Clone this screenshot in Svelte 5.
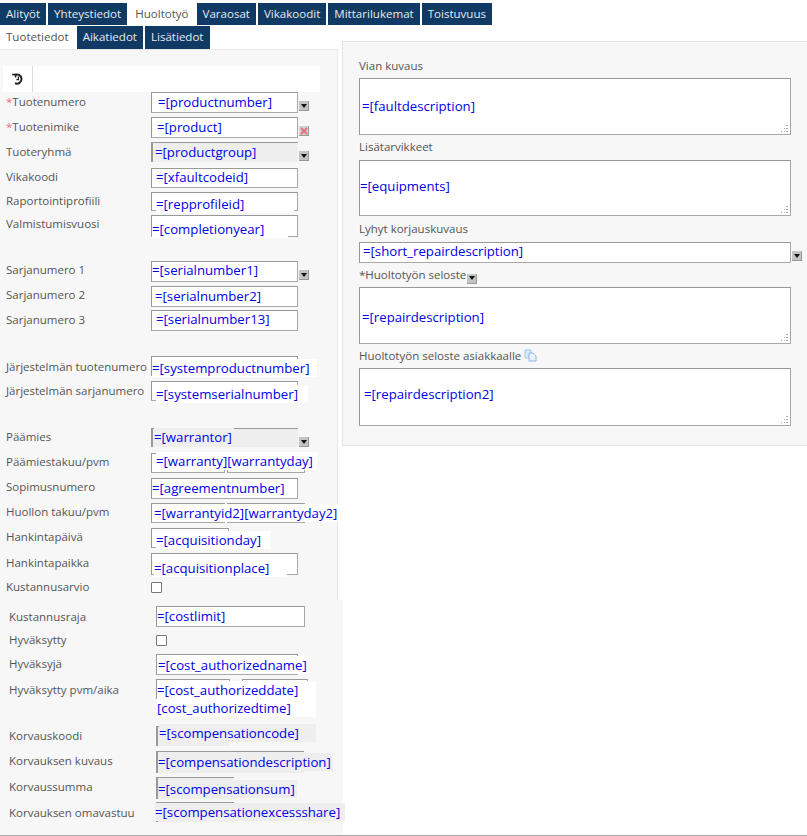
<script>
  const mainTabs = ['Alityöt', 'Yhteystiedot', 'Huoltotyö', 'Varaosat', 'Vikakoodit', 'Mittarilukemat', 'Toistuvuus'];
  const subTabs = ['Tuotetiedot', 'Aikatiedot', 'Lisätiedot'];

  // h = row pitch, fh = frame height, lt = label offset, vx/vy = where the bound value lands, vw = value box width
  const upperRows = [
    { label: 'Tuotenumero', req: true, value: '=[productnumber]', h: 25, fh: 21, lt: 1, vx: 7, vy: 2, btn: 'down' },
    { label: 'Tuotenimike', req: true, value: '=[product]', h: 25, fh: 21, lt: 1, vx: 6, vy: 2, btn: 'clear' },
    { label: 'Tuoteryhmä', value: '=[productgroup]', h: 26, fh: 20, lt: 1, vx: 4, vy: 2, btn: 'down', ro: true },
    { label: 'Vikakoodi', value: '=[xfaultcodeid]', h: 24, fh: 20, lt: 0, vx: 5, vy: 1, bare: true },
    { label: 'Raportointiprofiili', value: '=[repprofileid]', h: 23, fh: 19, lt: 0, vx: 5, vy: 4, vw: 136 },
    { label: 'Valmistumisvuosi', value: '=[completionyear]', h: 46, fh: 22, lt: 0, vx: 1, vy: 6, vw: 134 },
    { label: 'Sarjanumero 1', value: '=[serialnumber1]', h: 25, fh: 21, lt: 0, vx: 1, vy: 1, btn: 'down', bare: true },
    { label: 'Sarjanumero 2', value: '=[serialnumber2]', h: 24, fh: 21, lt: 0, vx: 4, vy: 2 },
    { label: 'Sarjanumero 3', value: '=[serialnumber13]', h: 46, fh: 21, lt: 1, vx: 5, vy: 1, bare: true },
    { label: 'Järjestelmän tuotenumero', value: '=[systemproductnumber]', h: 25, fh: 20, lt: 2, vx: 1, vy: 4, vw: 163 },
    { label: 'Järjestelmän sarjanumero', value: '=[systemserialnumber]', h: 47, fh: 20, lt: 1, vx: 5, vy: 5, vw: 150 },
    { label: 'Päämies', value: '=[warrantor]', h: 25, fh: 19, lt: 0, vx: 3, vy: 1, btn: 'down', ro: true },
    { label: 'Päämiestakuu/pvm', value: '=[warranty][warrantyday]', h: 25, fh: 20, w: 74, w2: 78, lt: 0, vx: 5, vy: 0, vw: 159 },
    { label: 'Sopimusnumero', value: '=[agreementnumber]', h: 25, fh: 21, lt: 0, vx: 1, vy: 2 },
    { label: 'Huollon takuu/pvm', value: '=[warrantyid2][warrantyday2]', h: 25, fh: 20, w: 74, w2: 78, lt: 0, vx: 3, vy: 2 },
    { label: 'Hankintapäivä', value: '=[acquisitionday]', h: 25, fh: 20, w: 78, lt: 0, vx: 5, vy: 4, vw: 112 },
    { label: 'Hankintapaikka', value: '=[acquisitionplace]', h: 29, fh: 22, lt: 1, vx: 3, vy: 7, vw: 131 },
    { label: 'Kustannusarvio', check: true, h: 19, lt: -4 }
  ];

  const lowerRows = [
    { label: 'Kustannusraja', value: '=[costlimit]', h: 29, fh: 21, w: 149, lt: 2, vx: 1, vy: 2, bare: true },
    { label: 'Hyväksytty', check: true, h: 19, lt: -4 },
    { label: 'Hyväksyjä', value: '=[cost_authorizedname]', h: 25, fh: 21, w: 142, lt: 1, vx: 2, vy: 3 },
    { label: 'Hyväksytty pvm/aika', value: '=[cost_authorizeddate]', value2: '[cost_authorizedtime]', h: 47, fh: 20, w: 74, w2: 66, gap: 12, lt: 2, vx: 1, vy: 3, vw: 157 },
    { label: 'Korvauskoodi', value: '=[scompensationcode]', h: 25, fh: 20, w: 74, lt: 1, vx: 3, vy: -1, ro: true, vw: 155 },
    { label: 'Korvauksen kuvaus', value: '=[compensationdescription]', h: 26, fh: 22, w: 148, lt: 1, vx: 2, vy: 3, ro: true },
    { label: 'Korvaussumma', value: '=[scompensationsum]', h: 25, fh: 22, w: 78, lt: 1, vx: 2, vy: 4, ro: true },
    { label: 'Korvauksen omavastuu', value: '=[scompensationexcessshare]', h: 33, fh: 20, w: 78, lt: 2, vx: -1, vy: 2, ro: true, vw: 188 }
  ];

  const areas = [
    { label: 'Vian kuvaus', value: '=[faultdescription]', h: 57, px: 2, py: 18, grip: true },
    { label: 'Lisätarvikkeet', value: '=[equipments]', h: 56, px: 0, py: 16, grip: true, lm: 4 },
    { label: 'Lyhyt korjauskuvaus', value: '=[short_repairdescription]', h: 21, px: 3, py: -1, btn: true, lm: 4, mt: 4 },
    { label: '*Huoltotyön seloste', value: '=[repairdescription]', h: 57, px: 2, py: 20, grip: true, icon: 'down' },
    { label: 'Huoltotyön seloste asiakkaalle', value: '=[repairdescription2]', h: 58, px: 4, py: 16, grip: true, icon: 'copy' }
  ];

  const valueWidth = (row) => (row.vw ? `width: ${row.vw}px;` : '');
</script>

{#snippet dropdown()}
  <span class="btn">
    <svg width="6" height="4" viewBox="0 0 6 4"><path d="M0 0h6L3 4z" fill="#111" /></svg>
  </span>
{/snippet}

{#snippet formRow(row)}
  <div class="row" style="height: {row.h}px">
    <div class="label" style="margin-top: {row.lt}px">
      {#if row.req}<span class="req">*</span>{/if}{row.label}
    </div>
    {#if row.check}
      <span class="check"></span>
    {:else}
      <div class="field">
        <span class="frame" class:ro={row.ro} style="width: {row.w ?? 147}px; height: {row.fh}px"></span>
        {#if row.w2}
          <span class="frame" style="width: {row.w2}px; height: {row.fh}px; margin-left: {row.gap ?? 2}px"></span>
        {/if}
        <span class="value" class:ro={row.ro} class:bare={row.bare} style="left: {row.vx}px; top: {row.vy}px; {valueWidth(row)}">
          {row.value}{#if row.value2}<br />{row.value2}{/if}
        </span>
        {#if row.btn === 'down'}
          {@render dropdown()}
        {:else if row.btn === 'clear'}
          <span class="btn clear">
            <svg width="8" height="8" viewBox="0 0 8 8"><path d="M1 1l6 6M7 1L1 7" stroke="#e8707c" stroke-width="2" /></svg>
          </span>
        {/if}
      </div>
    {/if}
  </div>
{/snippet}

<div class="tabs main-tabs">
  {#each mainTabs as tab}
    <span class="tab" class:active={tab === 'Huoltotyö'}>{tab}</span>
  {/each}
</div>

<div class="content">
  <div class="left">
    <div class="tabs sub-tabs">
      {#each subTabs as tab}
        <span class="tab" class:active={tab === 'Tuotetiedot'}>{tab}</span>
      {/each}
    </div>
    <div class="panel upper">
      <div class="toolbar">
        <span class="tool">
          <svg width="14" height="14" viewBox="0 0 14 14" fill="none" stroke="#222" stroke-width="2">
            <path d="M3.4 3.2A4.6 4.6 0 1 1 4 11.2" />
            <path d="M1 2.4h3.6V5.4" stroke-width="1.5" />
            <path d="M7.4 4.6v3H5.4" stroke-width="1.3" />
          </svg>
        </span>
      </div>
      {#each upperRows as row}
        {@render formRow(row)}
      {/each}
    </div>
    <div class="panel lower">
      {#each lowerRows as row}
        {@render formRow(row)}
      {/each}
    </div>
  </div>

  <div class="panel right">
    {#each areas as area}
      <div class="area-label" style="margin-bottom: {area.lm ?? 3}px; margin-top: {area.mt ?? 0}px">
        {area.label}{#if area.icon === 'down'}{@render dropdown()}{:else if area.icon === 'copy'}
          <svg class="copy" width="13" height="13" viewBox="0 0 13 13">
            <path d="M1 1h6v8H1z" fill="#dbe8f8" stroke="#a9c6ea" />
            <path d="M5 4h4l3 3v5H5z" fill="#eaf2fc" stroke="#8fb6e6" />
          </svg>
        {/if}
      </div>
      <div class="area-row">
        <div class="area" style="height: {area.h}px; padding-left: {area.px}px">
          <span class="area-value" style="margin-top: {area.py}px">{area.value}</span>
          {#if area.grip}
            <svg class="grip" width="7" height="7" viewBox="0 0 7 7" fill="#aaa">
              <path d="M5 0h2v1H5zM3 3h1v1H3zM5 3h2v1H5zM0 6h1v1H0zM3 6h1v1H3zM5 6h2v1H5z" />
            </svg>
          {/if}
        </div>
        {#if area.btn}{@render dropdown()}{/if}
      </div>
    {/each}
  </div>
</div>

<div class="bottom-line"></div>

<style>
  :global(body) {
    background: #fff;
    font-family: "Open Sans", sans-serif;
    font-size: 11.5px;
    color: #555;
  }

  .tabs {
    display: flex;
    gap: 2px;
    height: 22px;
    line-height: 22px;
    font-size: 11.55px;
  }

  .main-tabs {
    padding-top: 3px;
    margin-bottom: 1px;
    width: 807px;
  }

  .sub-tabs {
    height: 23px;
  }

  .tab {
    padding: 0 6px;
    background: #103a63;
    color: #e4ebf2;
    white-space: nowrap;
  }

  .tab.active {
    background: #fff;
    color: #555;
  }

  .content {
    display: flex;
    align-items: flex-start;
  }

  .left {
    width: 342px;
    flex: none;
  }

  .panel {
    background: #f7f7f7;
    box-sizing: border-box;
  }

  .upper {
    width: 338px;
    height: 551px;
    padding-top: 16px;
    border-right: 1px solid #e6e6e6;
    border-top: 1px solid #e6e6e6;
  }

  .lower {
    width: 343px;
    height: 235px;
    padding: 6px 0 0 3px;
  }

  .lower .label {
    width: 147px;
  }

  .toolbar {
    display: flex;
    width: 317px;
    height: 26px;
    margin-left: 3px;
    background: #fff;
  }

  .tool {
    display: flex;
    align-items: center;
    justify-content: center;
    width: 29px;
    border-right: 1px solid #ddd;
  }

  .row {
    display: flex;
    padding-left: 6px;
  }

  .label {
    width: 145px;
    height: 18px;
    line-height: 18px;
    flex: none;
    white-space: nowrap;
  }

  .req {
    color: #e8707c;
  }

  .field {
    position: relative;
    display: flex;
    align-items: flex-start;
  }

  .frame {
    box-sizing: border-box;
    flex: none;
    display: block;
    background: #fff;
    border: 1px solid #a8a8a8;
    border-top-color: #999;
    border-left-color: #999;
  }

  .frame.ro {
    background: #eee;
    border-left-width: 2px;
    border-right: none;
    border-bottom: none;
  }

  .value {
    position: absolute;
    margin-top: -1px;
    padding-right: 2px;
    background: #fff;
    color: #0000e6;
    font-size: 13.2px;
    line-height: 18px;
    white-space: nowrap;
  }

  .value.ro {
    background: #eee;
  }

  .value.bare {
    background: transparent;
  }

  .btn {
    box-sizing: border-box;
    display: inline-flex;
    flex: none;
    align-items: center;
    justify-content: center;
    width: 10px;
    height: 10px;
    margin: 9px 0 0 1px;
    background: #c4c4c4;
    border-right: 1px solid #999;
    border-bottom: 1px solid #999;
  }

  .btn.clear {
    background: #d2d2d2;
  }

  .check {
    box-sizing: border-box;
    width: 11px;
    height: 11px;
    background: #fff;
    border: 1px solid #777;
    border-radius: 1px;
  }

  .right {
    width: 465px;
    height: 405px;
    margin-top: 15px;
    padding: 15px 15px 0 16px;
    border: 1px solid #e2e2e2;
    border-right: none;
  }

  .area-label {
    height: 18px;
    line-height: 18px;
    white-space: nowrap;
  }

  .area-label .btn {
    margin: 0 0 0 1px;
    vertical-align: -1px;
  }

  .copy {
    margin-left: 3px;
    vertical-align: -2px;
  }

  .area-row {
    display: flex;
    margin-bottom: 3px;
  }

  .area {
    position: relative;
    box-sizing: border-box;
    width: 432px;
    flex: none;
    background: #fff;
    border: 1px solid #a8a8a8;
    border-top-color: #999;
    border-left-color: #999;
  }

  .area-value {
    display: block;
    color: #0000e6;
    font-size: 13.2px;
    line-height: 18px;
    white-space: nowrap;
  }

  .grip {
    position: absolute;
    right: 2px;
    bottom: 2px;
  }

  .bottom-line {
    border-top: 1px solid #aaa;
  }
</style>
